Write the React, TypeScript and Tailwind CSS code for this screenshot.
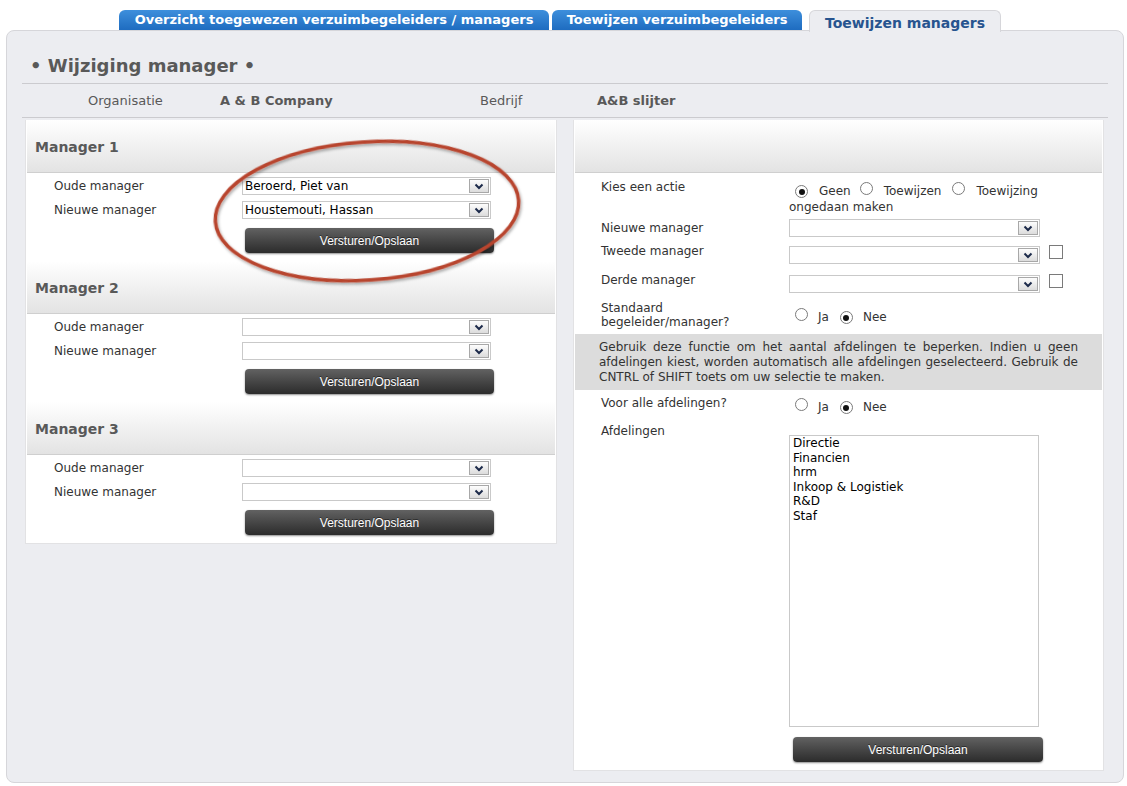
import React from 'react';

const FONT = "font-['DejaVu_Sans',Verdana,sans-serif]";

const Chevron = () => (
  <svg width="10" height="7" viewBox="0 0 10 7">
    <path d="M1.5 1.5 L5 5 L8.5 1.5" fill="none" stroke="#1c2a4a" strokeWidth="2" />
  </svg>
);

const Select: React.FC<{ value?: string; width: string }> = ({ value, width }) => (
  <div className={`${width} h-[18px] border border-[#c9c9c9] bg-white flex items-center`}>
    <span className="flex-1 pl-[2px] text-[12px] leading-[16px] text-black truncate">{value}</span>
    <span className="mr-[1px] w-[20px] h-[14px] border border-[#a8a8a8] bg-gradient-to-b from-[#fdfdfd] to-[#dcdcdc] flex items-center justify-center">
      <Chevron />
    </span>
  </div>
);

const SaveButton: React.FC<{ className?: string }> = ({ className = '' }) => (
  <div
    className={`${className} w-[249px] h-[25px] rounded-[4px] bg-gradient-to-b from-[#626262] to-[#2c2c2c] text-white text-[12px] font-['Liberation_Sans',Arial,sans-serif] flex items-center justify-center shadow-[0_1px_2px_rgba(0,0,0,0.45)] [text-shadow:0_-1px_0_rgba(0,0,0,0.5)]`}
  >
    Versturen/Opslaan
  </div>
);

const Radio: React.FC<{ checked?: boolean }> = ({ checked }) => (
  <span className="inline-flex w-[13px] h-[13px] rounded-full border border-[#7a7a7a] bg-white items-center justify-center shrink-0">
    {checked && <span className="w-[6px] h-[6px] rounded-full bg-[#111]" />}
  </span>
);

const Checkbox = () => <span className="block w-[14px] h-[14px] border border-[#7a7a7a] bg-white" />;

const SectionHeader: React.FC<{ title?: string }> = ({ title }) => (
  <div className="h-[53px] border-b border-[#cfcfcf] bg-gradient-to-b from-white to-[#e3e3e3] flex items-center pl-[8px] pt-[2px]">
    {title && <span className="text-[14px] font-bold text-[#595959]">{title}</span>}
  </div>
);

const ManagerSection: React.FC<{ title: string; oude?: string; nieuwe?: string }> = ({ title, oude, nieuwe }) => (
  <div>
    <SectionHeader title={title} />
    <div className="pt-[4px] pb-[8px]">
      <div className="flex items-center h-[18px]">
        <div className="w-[215px] pl-[27px] text-[12px] text-[#333]">Oude manager</div>
        <Select value={oude} width="w-[249px]" />
      </div>
      <div className="flex items-center h-[18px] mt-[6px]">
        <div className="w-[215px] pl-[27px] text-[12px] text-[#333]">Nieuwe manager</div>
        <Select value={nieuwe} width="w-[249px]" />
      </div>
      <div className="flex mt-[9px]">
        <div className="w-[218px]" />
        <SaveButton />
      </div>
    </div>
  </div>
);

const departments = ['Directie', 'Financien', 'hrm', 'Inkoop & Logistiek', 'R&D', 'Staf'];

export default function App() {
  return (
    <div className={`relative w-[1127px] h-[786px] overflow-hidden bg-white ${FONT}`}>
      {/* Tabs */}
      <div className="h-[30px] flex items-end pl-[119px]">
        <div className="w-[430px] h-[20px] rounded-t-[6px] bg-gradient-to-b from-[#3d8fdc] to-[#1e6cc0] text-white text-[13px] font-bold flex items-center justify-center">
          Overzicht toegewezen verzuimbegeleiders / managers
        </div>
        <div className="ml-[3px] w-[250px] h-[20px] rounded-t-[6px] bg-gradient-to-b from-[#3d8fdc] to-[#1e6cc0] text-white text-[13px] font-bold flex items-center justify-center">
          Toewijzen verzuimbegeleiders
        </div>
        <div className="relative z-10 ml-[7px] mb-[-2px] w-[192px] h-[22px] rounded-t-[6px] border border-b-0 border-[#d6d6da] bg-[#ecedf1] text-[#27548f] text-[14px] font-bold flex items-center justify-center pt-[3px]">
          Toewijzen managers
        </div>
      </div>

      {/* Main container */}
      <div className="ml-[6px] w-[1118px] h-[753px] rounded-[8px] border border-[#d6d6da] bg-[#ecedf1]">
        <div className="px-[15px]">
          <div className="h-[53px] border-b border-[#cbcbcf] pt-[24px] pl-[8px] text-[18px] leading-[22px] font-bold text-[#595959]">
            • Wijziging manager •
          </div>
          <div className="h-[34px] border-b border-[#cbcbcf] flex items-center pt-[1px] text-[13px] text-[#595959]">
            <div className="w-[198px] pl-[66px]">Organisatie</div>
            <div className="w-[260px] font-bold">A &amp; B Company</div>
            <div className="w-[117px]">Bedrijf</div>
            <div className="font-bold">A&amp;B slijter</div>
          </div>
        </div>

        <div className="flex items-start gap-[16px] pl-[18px] mt-[2px]">
          {/* Left panel */}
          <div className="w-[532px] bg-white border border-t-0 border-[#e2e2e4] px-[1px]">
            <ManagerSection title="Manager 1" oude="Beroerd, Piet van" nieuwe="Houstemouti, Hassan" />
            <ManagerSection title="Manager 2" />
            <ManagerSection title="Manager 3" />
          </div>

          {/* Right panel */}
          <div className="w-[531px] bg-white border border-t-0 border-[#e2e2e4] px-[1px] pb-[8px] text-[12px] text-[#333]">
            <SectionHeader />

            <div className="flex mt-[6px]">
              <div className="w-[214px] pl-[26px] leading-[16px]">Kies een actie</div>
              <div className="pt-[3px] leading-[16px]">
                <div className="flex items-center">
                  <span className="ml-[6px]"><Radio checked /></span>
                  <span className="ml-[11px]">Geen</span>
                  <span className="ml-[9px]"><Radio /></span>
                  <span className="ml-[11px]">Toewijzen</span>
                  <span className="ml-[11px]"><Radio /></span>
                  <span className="ml-[11px]">Toewijzing</span>
                </div>
                <div>ongedaan maken</div>
              </div>
            </div>

            <div className="flex mt-[4px]">
              <div className="w-[214px] pl-[26px] pt-[1px] leading-[16px]">Nieuwe manager</div>
              <Select width="w-[251px]" />
            </div>

            <div className="flex mt-[6px]">
              <div className="w-[214px] pl-[26px] leading-[16px]">Tweede manager</div>
              <div className="pt-[3px]"><Select width="w-[251px]" /></div>
              <div className="ml-[9px] pt-[2px]"><Checkbox /></div>
            </div>

            <div className="flex mt-[8px]">
              <div className="w-[214px] pl-[26px] leading-[16px]">Derde manager</div>
              <div className="pt-[3px]"><Select width="w-[251px]" /></div>
              <div className="ml-[9px] pt-[2px]"><Checkbox /></div>
            </div>

            <div className="flex mt-[8px]">
              <div className="w-[214px] pl-[26px] leading-[14px]">Standaard<br />begeleider/manager?</div>
              <div className="pt-[3px] leading-[16px] flex items-center">
                <span className="ml-[6px]"><Radio /></span>
                <span className="ml-[10px]">Ja</span>
                <span className="ml-[11px]"><Radio checked /></span>
                <span className="ml-[10px]">Nee</span>
              </div>
            </div>

            <div className="mt-[5px] h-[56px] bg-[#dcdcdc] px-[24px] pt-[6px] leading-[15px] text-justify">
              Gebruik deze functie om het aantal afdelingen te beperken. Indien u geen afdelingen kiest, worden automatisch alle afdelingen geselecteerd. Gebruik de CNTRL of SHIFT toets om uw selectie te maken.
            </div>

            <div className="flex mt-[5px]">
              <div className="w-[214px] pl-[26px] leading-[16px]">Voor alle afdelingen?</div>
              <div className="pt-[3px] leading-[16px] flex items-center">
                <span className="ml-[6px]"><Radio /></span>
                <span className="ml-[10px]">Ja</span>
                <span className="ml-[11px]"><Radio checked /></span>
                <span className="ml-[10px]">Nee</span>
              </div>
            </div>

            <div className="flex mt-[8px]">
              <div className="w-[214px] pl-[26px] leading-[16px]">Afdelingen</div>
              <div className="mt-[12px] w-[250px] h-[292px] border border-[#c9c9c9] bg-white px-[3px] text-black leading-[14.6px]">
                {departments.map((d) => (
                  <div key={d}>{d}</div>
                ))}
              </div>
            </div>

            <div className="flex mt-[10px]">
              <div className="w-[218px]" />
              <SaveButton className="w-[250px]" />
            </div>
          </div>
        </div>
      </div>

      {/* Red annotation ellipse */}
      <svg className="absolute left-0 top-0 pointer-events-none" width="1127" height="786">
        <defs>
          <filter id="sh" x="-20%" y="-20%" width="140%" height="140%">
            <feDropShadow dx="1" dy="2" stdDeviation="1.5" floodColor="#000" floodOpacity="0.35" />
          </filter>
        </defs>
        <ellipse
          cx="367"
          cy="211"
          rx="152"
          ry="69"
          transform="rotate(-4 367 211)"
          fill="none"
          stroke="#b8452f"
          strokeWidth="3.5"
          filter="url(#sh)"
        />
      </svg>
    </div>
  );
}
